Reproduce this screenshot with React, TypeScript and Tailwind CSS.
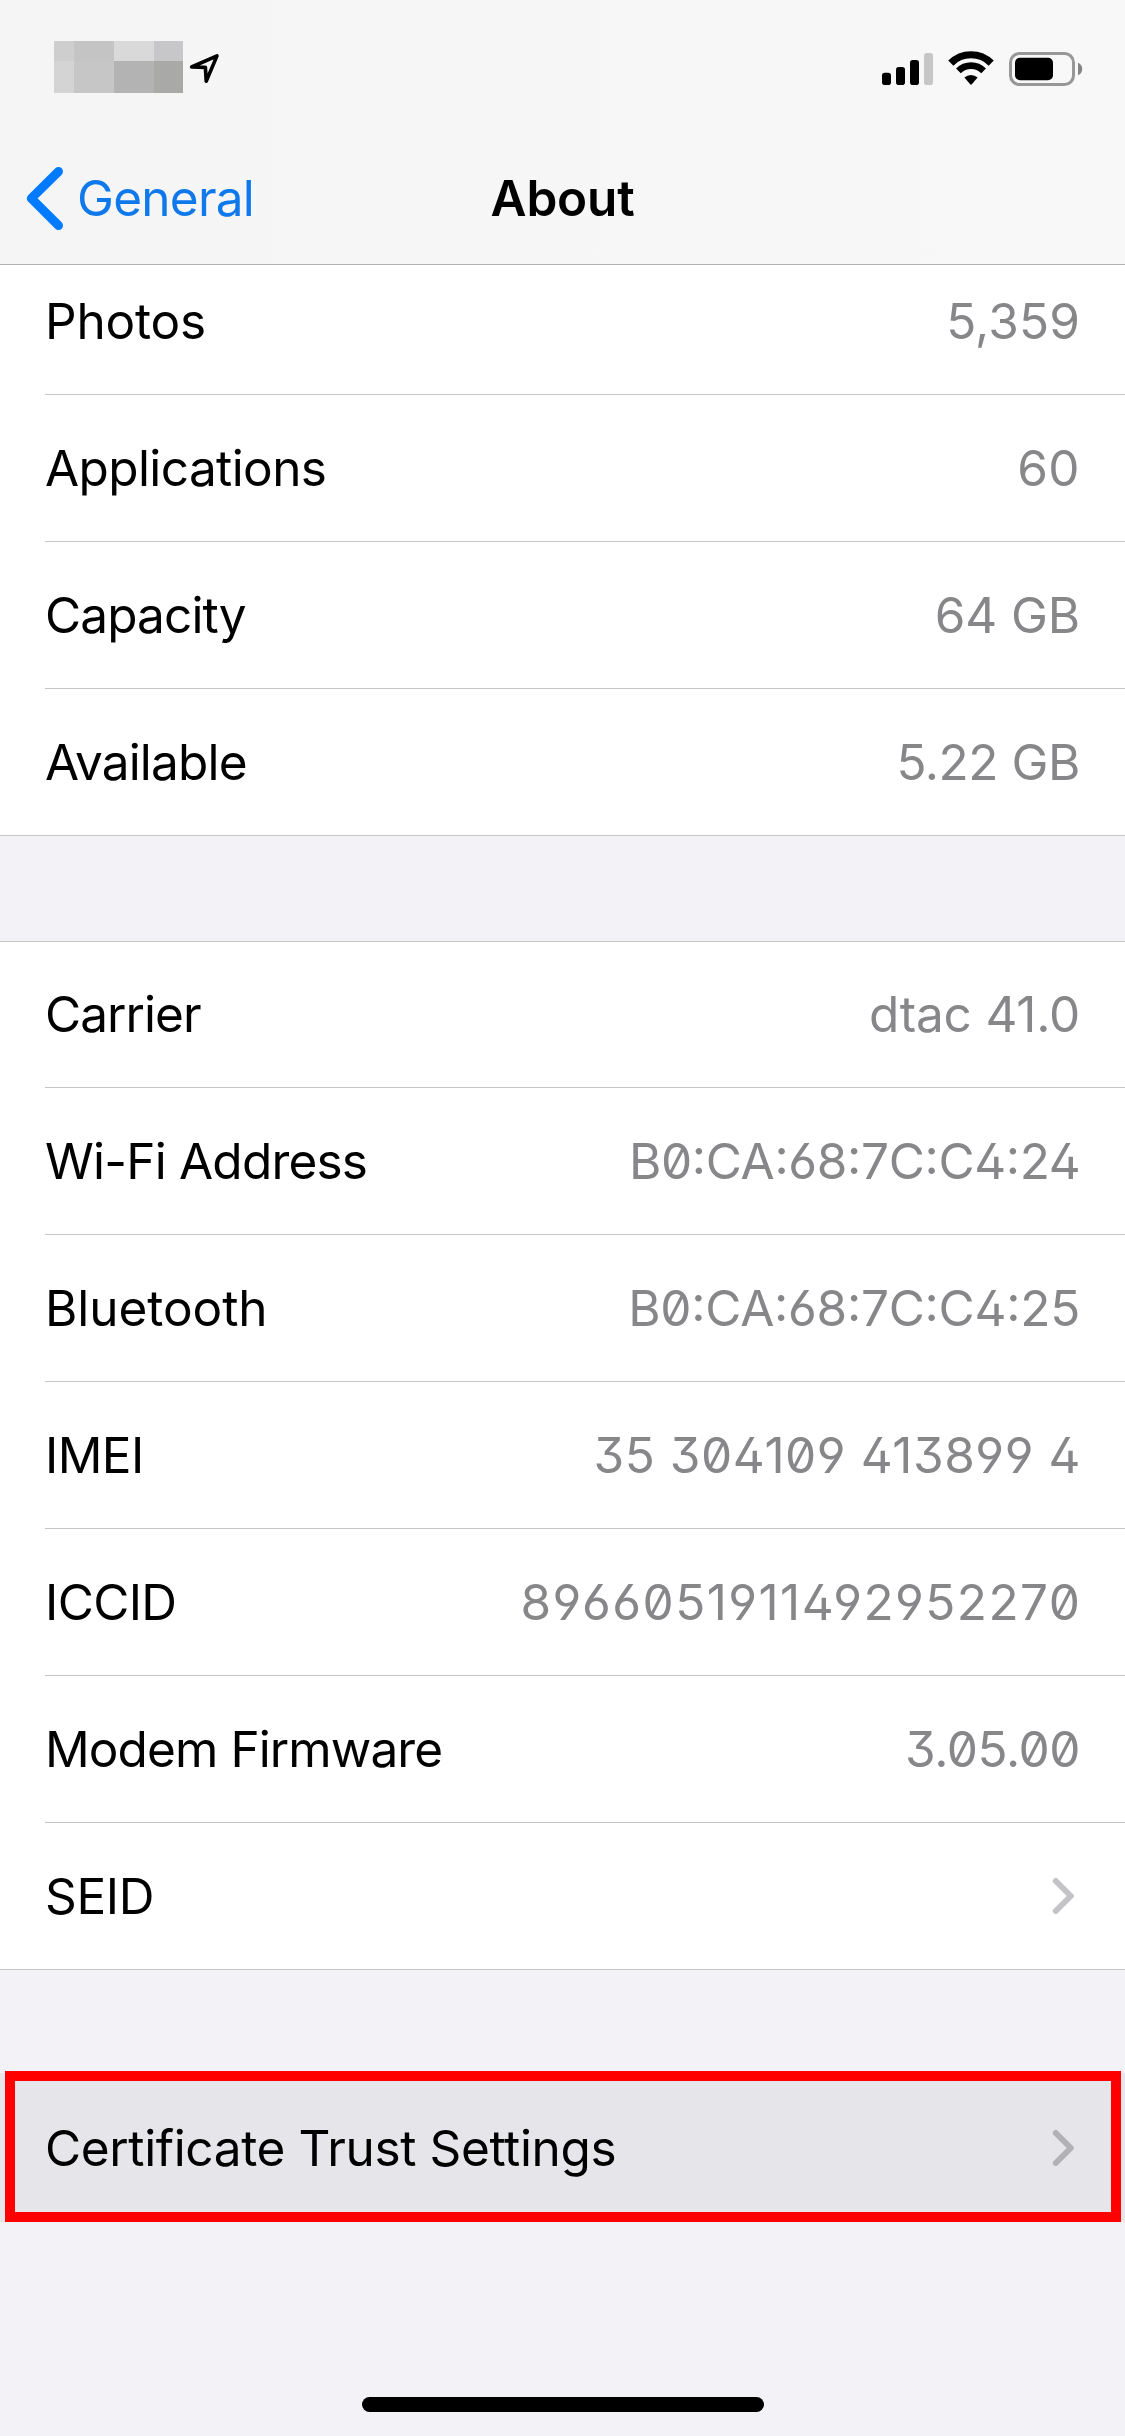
type RowData = {
  label: string;
  labelClass: string;
  value?: string;
  valueClass?: string;
};

const storageRows: RowData[] = [
  { label: "Photos", labelClass: "tracking-[-0.19px]", value: "5,359", valueClass: "tracking-[0.15px]" },
  { label: "Applications", labelClass: "tracking-[-0.6px]", value: "60", valueClass: "tracking-[0.4px]" },
  { label: "Capacity", labelClass: "tracking-[-0.88px]", value: "64 GB", valueClass: "tracking-[-0.13px]" },
  { label: "Available", labelClass: "tracking-[-0.82px]", value: "5.22 GB", valueClass: "tracking-[-0.45px]" },
];

const deviceRows: RowData[] = [
  { label: "Carrier", labelClass: "tracking-[-0.95px]", value: "dtac 41.0", valueClass: "tracking-[-0.2px]" },
  {
    label: "Wi-Fi Address",
    labelClass: "tracking-[-0.78px]",
    value: "B0:CA:68:7C:C4:24",
    valueClass: "mr-[-0.5px] tracking-[-0.34px] [font-feature-settings:'zero','ss01','calt']",
  },
  {
    label: "Bluetooth",
    labelClass: "tracking-[-0.06px]",
    value: "B0:CA:68:7C:C4:25",
    valueClass: "tracking-[-0.26px] [font-feature-settings:'zero','ss01','calt']",
  },
  {
    label: "IMEI",
    labelClass: "tracking-[-0.6px]",
    value: "35 304109 413899 4",
    valueClass: "mr-[-1px] tracking-[0.55px] [font-feature-settings:'zero','ss01','calt']",
  },
  {
    label: "ICCID",
    labelClass: "tracking-[-0.65px]",
    value: "8966051911492952270",
    valueClass: "mr-[-1.5px] tracking-[1.45px] [font-feature-settings:'zero','ss01','calt']",
  },
  {
    label: "Modem Firmware",
    labelClass: "tracking-[-0.9px]",
    value: "3.05.00",
    valueClass: "tracking-[-0.45px] [font-feature-settings:'zero','ss01','calt']",
  },
  { label: "SEID", labelClass: "tracking-[-0.35px]" },
];

function Disclosure({ className }: { className: string }) {
  return (
    <svg width="24" height="40" viewBox="0 0 24 40" fill="none" className={className}>
      <path
        d="M4.8 5L19.8 20L4.8 35"
        stroke="currentColor"
        strokeWidth="6"
        strokeLinecap="round"
        strokeLinejoin="round"
      />
    </svg>
  );
}

function Row({ row, className }: { row: RowData; className: string }) {
  return (
    <div className={className}>
      <span className={row.labelClass}>{row.label}</span>
      {row.value ? (
        <span className={`text-[#87878a] ${row.valueClass}`}>{row.value}</span>
      ) : (
        <Disclosure className="mr-[5px] text-[#c4c4c6]" />
      )}
    </div>
  );
}

const rowBase = "flex flex-1 items-center justify-between pr-[45px]";

function Group({ rows, clipped }: { rows: RowData[]; clipped?: boolean }) {
  return (
    <section className="border-b border-[#c5c5c8] bg-white">
      {rows.map((row, i) => {
        const last = i === rows.length - 1;
        const height =
          i > 0 ? (last ? "h-[146px]" : "h-[147px]") : clipped ? "h-[130px]" : "h-[146px]";
        return (
          <div key={row.label} className={`flex pl-[45px] ${height}`}>
            <Row
              row={row}
              className={`${rowBase} ${last ? "" : "border-b border-[#c5c5c8]"} ${
                i > 0 ? "" : clipped ? "pb-[17px]" : "pb-px"
              }`}
            />
          </div>
        );
      })}
    </section>
  );
}

function StatusBar() {
  return (
    <div className="flex h-[132px] items-start justify-between">
      <div className="flex items-start pt-[41px] pl-[54px]">
        <div className="grid grid-cols-[20px_40px_40px_29px] grid-rows-[20px_32px]">
          <i className="bg-[#cecece]" />
          <i className="bg-[#c4c4c4]" />
          <i className="bg-[#d9d9d9]" />
          <i className="bg-[#c7c7c9]" />
          <i className="bg-[#d4d4d4]" />
          <i className="bg-[#c6c6c6]" />
          <i className="bg-[#b3b3b3]" />
          <i className="bg-[#a9a9a8]" />
        </div>
        <svg width="36" height="36" viewBox="0 0 36 36" fill="none" className="mt-2.5 ml-1">
          <path
            d="M4.6 16L30 4.9L19.2 30.2L18.4 16.4Z"
            stroke="#000"
            strokeWidth="3.6"
            strokeLinejoin="round"
          />
        </svg>
      </div>
      <div className="flex items-start pt-[50px] pr-[42px]">
        <svg width="52" height="38" viewBox="0 0 52 38">
          <rect x="0" y="22.7" width="9" height="12.3" rx="2.8" />
          <rect x="14" y="17" width="9" height="18" rx="2.8" />
          <rect x="28" y="10" width="9" height="25" rx="2.8" />
          <rect x="42" y="3" width="9" height="32" rx="2.8" fill="#c6c6c6" />
        </svg>
        <svg width="46" height="38" viewBox="0 0 46 38" fill="none" className="ml-3.5">
          <path d="M2.8 13.1A28.6 28.6 0 0 1 43.2 13.1" stroke="#000" strokeWidth="7.2" />
          <path d="M10.4 20.9A17.8 17.8 0 0 1 35.6 20.9" stroke="#000" strokeWidth="6.6" />
          <path d="M16.4 27.6A9.4 9.4 0 0 1 29.6 27.6L23.8 34.3Q23 35 22.2 34.3Z" fill="#000" />
        </svg>
        <svg width="74" height="38" viewBox="0 0 74 38" fill="none" className="ml-[15px]">
          <rect x="1.5" y="3.5" width="63" height="31" rx="9" stroke="#979797" strokeWidth="3" />
          <rect x="6" y="7.7" width="38" height="22.5" rx="5" fill="#000" />
          <path d="M69 12.7Q73.2 14.6 73.2 19T69 25.3Z" fill="#858585" />
        </svg>
      </div>
    </div>
  );
}

export default function App() {
  return (
    <div className="flex h-[2436px] w-[1125px] flex-col bg-[#f2f2f7] font-['Inter',sans-serif] text-[49.5px] leading-[60px] whitespace-nowrap text-black">
      <header className="h-[265px] border-b border-[#b0b0b2] bg-linear-to-r from-[#f5f5f5] to-[#f8f8f8]">
        <StatusBar />
        <nav className="grid h-[132px] grid-cols-3 items-center">
          <a className="flex items-center pl-[26px] text-[#0f79ec]">
            <svg width="40" height="66" viewBox="0 0 40 66" fill="none">
              <path
                d="M32.5 6.5L5.3 33.4L32.5 60.5"
                stroke="#007aff"
                strokeWidth="9"
                strokeLinecap="round"
                strokeLinejoin="round"
              />
            </svg>
            <span className="ml-[11px] tracking-[-0.75px]">General</span>
          </a>
          <h1 className="text-center font-semibold tracking-[-0.2px]">About</h1>
        </nav>
      </header>

      <main className="flex flex-col">
        <Group rows={storageRows} clipped />
        <div className="mt-[105px] border-t border-[#c5c5c8]">
          <Group rows={deviceRows} />
        </div>
        <div className="mt-[101px] h-[151px] bg-linear-to-b from-transparent from-[2px] to-[#e5e5ea] to-[2px] pr-1 pl-[5px]">
          <div className="flex h-[151px] items-center justify-between border-10 border-[#fe0000] bg-[#e5e5ea] pt-0.5 pr-9 pl-[30px]">
            <span className="tracking-[-0.37px]">Certificate Trust Settings</span>
            <Disclosure className="text-[#b1b1b6]" />
          </div>
        </div>
      </main>

      <div className="mt-auto flex justify-center pb-6">
        <div className="h-[15px] w-[402px] rounded-full bg-black" />
      </div>
    </div>
  );
}
